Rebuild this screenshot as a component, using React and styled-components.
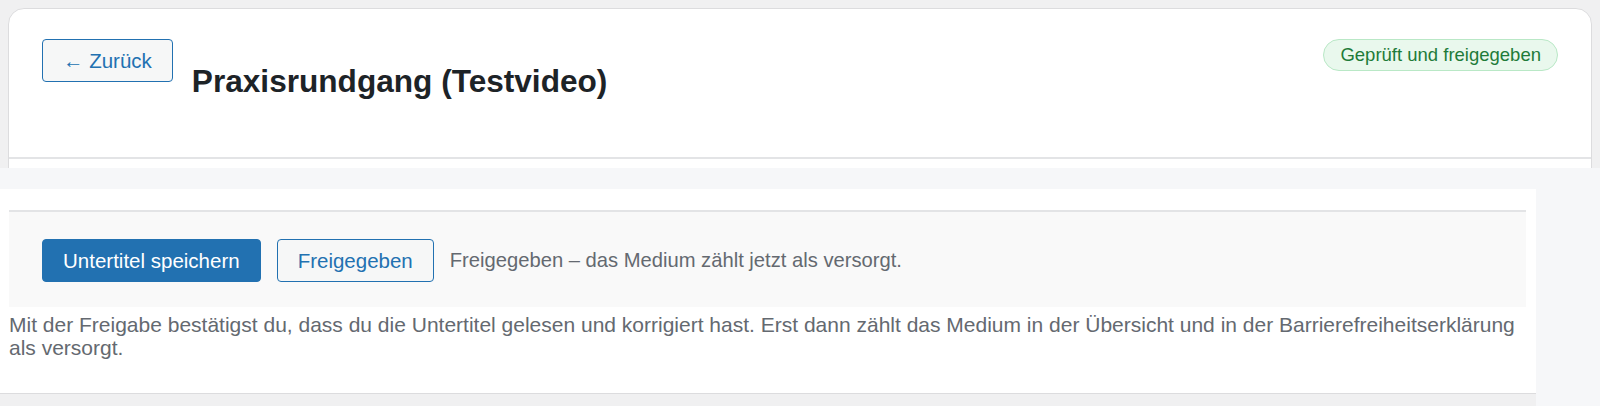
import React from "react";
import styled, { createGlobalStyle } from "styled-components";

const GlobalStyle = createGlobalStyle`
  html, body {
    height: 100%;
  }
  body {
    margin: 8px;
    background: #f0f0f1;
    font-family: "Liberation Sans", Arial, sans-serif;
    color: #1d2327;
    overflow: hidden;
  }
`;

export default function App() {
  return (
    <>
      <GlobalStyle />
      <Card>
        <Header>
          <HeaderLeft>
            <Button>← Zurück</Button>
            <Title>Praxisrundgang (Testvideo)</Title>
          </HeaderLeft>
          <Badge>Geprüft und freigegeben</Badge>
        </Header>
      </Card>
      <Overlay>
        <Column>
          <Panel>
            <ReviewBox>
              <Button primary>Untertitel speichern</Button>
              <Button>Freigegeben</Button>
              <StatusText>Freigegeben – das Medium zählt jetzt als versorgt.</StatusText>
            </ReviewBox>
            <Description>
              Mit der Freigabe bestätigst du, dass du die Untertitel gelesen und
              korrigiert hast. Erst dann zählt das Medium in der Übersicht und in
              der Barrierefreiheitserklärung als versorgt.
            </Description>
          </Panel>
        </Column>
      </Overlay>
    </>
  );
}

const Card = styled.div`
  background: #fff;
  border: 1px solid #dcdcde;
  border-radius: 16px;
  height: 600px;
`;

const Header = styled.div`
  display: flex;
  align-items: flex-start;
  justify-content: space-between;
  padding: 30px 33px 35px 33px;
  border-bottom: 2px solid #e3e4e6;
`;

const HeaderLeft = styled.div`
  display: flex;
  align-items: flex-start;
  gap: 19px;
`;

const Title = styled.h1`
  margin: 22px 0 20px;
  font-size: 31.6px;
  line-height: 1.3;
  font-weight: 700;
  color: #1d2327;
`;

const Badge = styled.span`
  display: inline-block;
  padding: 4px 16px;
  font-size: 18.5px;
  line-height: 22px;
  color: #1e7b39;
  background: #e9f8ed;
  border: 1px solid #b9e8c6;
  border-radius: 999px;
`;

const Button = styled.button`
  font-family: inherit;
  font-size: 20.5px;
  line-height: 23px;
  padding: 9px 20px;
  border-radius: 4px;
  border: 1px solid #2271b1;
  background: ${(p) => (p.primary ? "#2271b1" : "#f6f7f7")};
  color: ${(p) => (p.primary ? "#fff" : "#2271b1")};
  cursor: pointer;
  white-space: nowrap;
`;

const Overlay = styled.div`
  position: fixed;
  top: 168px;
  left: 0;
  right: 0;
  bottom: 0;
  background: #f6f7f9;
  padding: 21px 64px 0 0;
  display: flex;
`;

const Column = styled.div`
  flex: 1;
  background: #f0f0f1;
`;

const Panel = styled.div`
  background: #fff;
  border-bottom: 1px solid #dcdcde;
  padding: 21px 10px 34px 9px;
`;

const ReviewBox = styled.div`
  display: flex;
  align-items: center;
  gap: 16px;
  padding: 27px 32px 25px 33px;
  background: #f9f9f9;
  border-top: 2px solid #e3e4e6;
`;

const StatusText = styled.span`
  font-size: 20.2px;
  color: #646970;
`;

const Description = styled.p`
  margin: 6px 0 0;
  font-size: 21px;
  line-height: 23px;
  color: #646970;
`;
